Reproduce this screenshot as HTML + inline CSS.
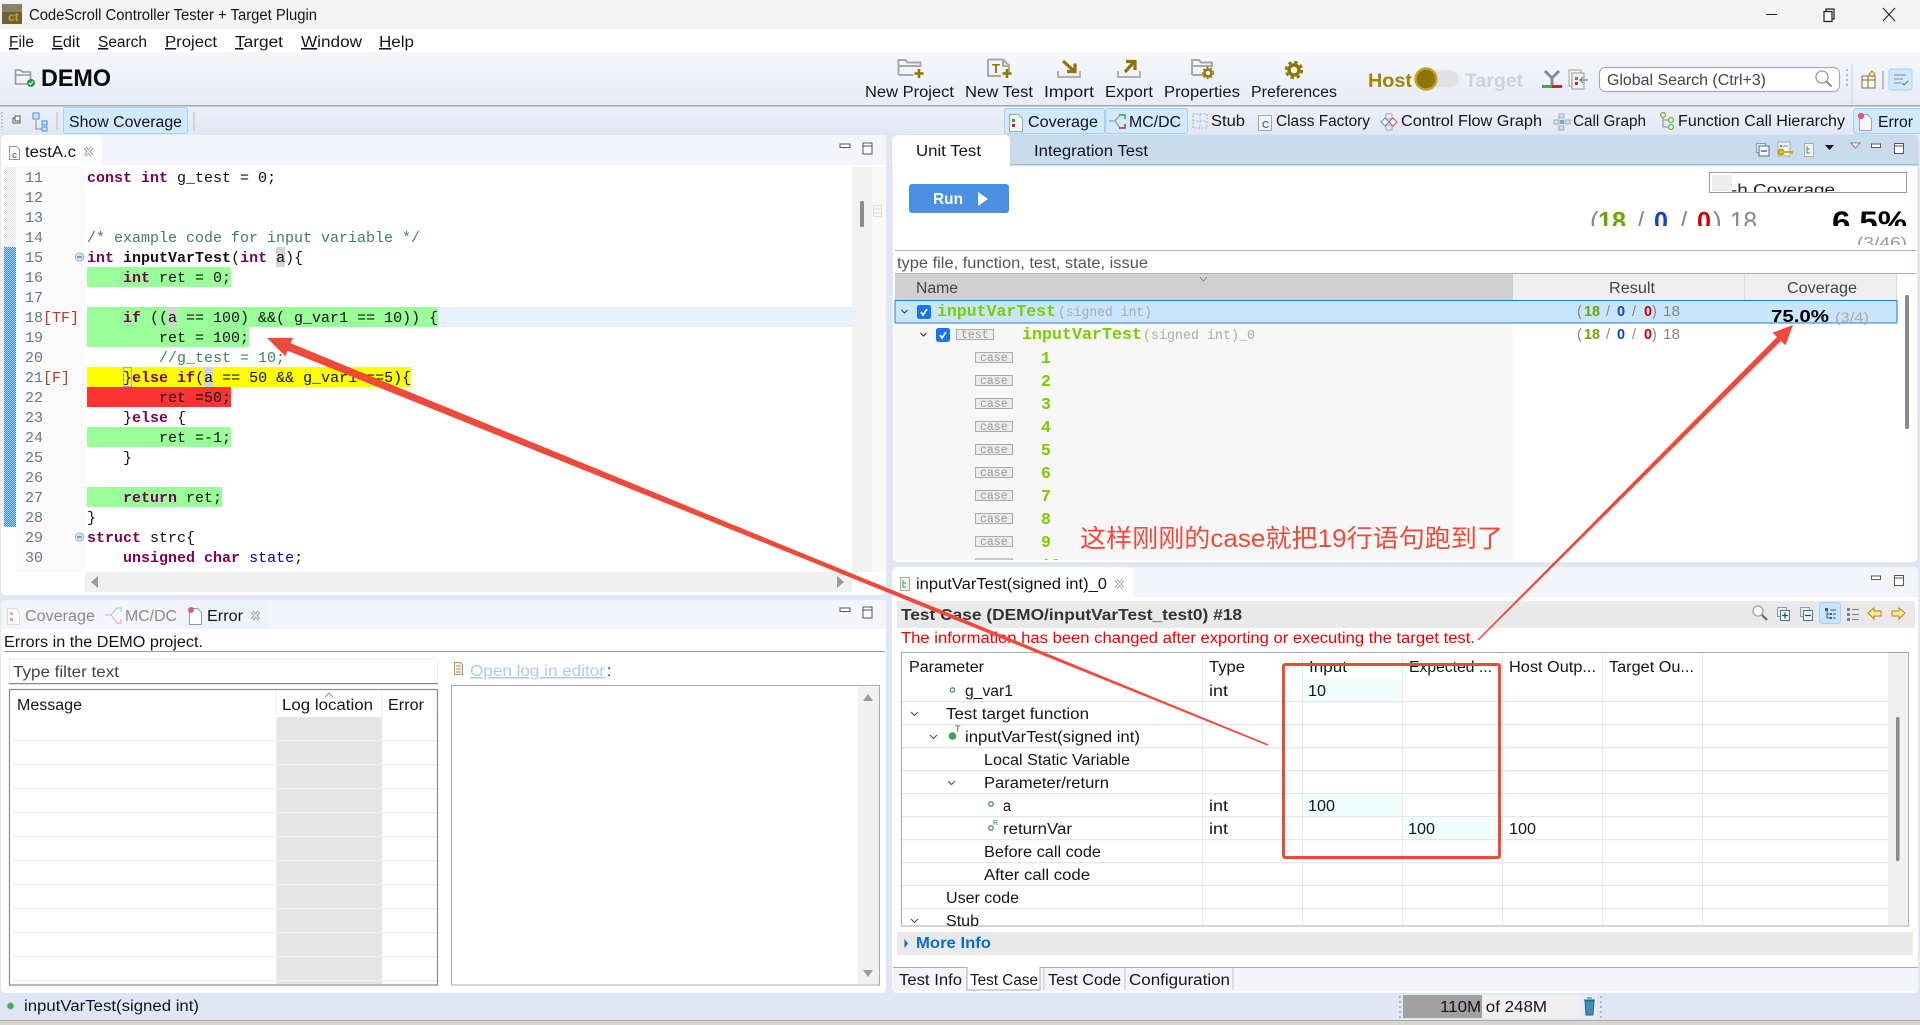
<!DOCTYPE html>
<html><head><meta charset="utf-8"><title>CodeScroll Controller Tester + Target Plugin</title>
<style>
html,body{margin:0;padding:0;background:#e0e6f4;width:1920px;height:1025px;overflow:hidden}
svg{display:block}
text{font-family:"Liberation Sans","Noto Sans CJK SC",sans-serif;font-size:15.5px;fill:#14141e;white-space:pre}
.m,.m tspan{font-family:"Liberation Mono",monospace;font-size:15px;fill:#111}
.k{fill:#7f0055!important;font-weight:bold}
.b{font-weight:bold}
.c{fill:#3f7f5f!important}
.ln{font-family:"Liberation Mono",monospace;font-size:15px;fill:#63788a}
.lr{font-family:"Liberation Mono",monospace;font-size:15px;fill:#c0392b}
.g{font-family:"Liberation Mono",monospace;font-size:16.5px;font-weight:bold;fill:#7ccb00}
.gs{font-family:"Liberation Mono",monospace;font-size:13.5px;fill:#aaa}
.cs{font-family:"Liberation Mono",monospace;font-size:11.5px;fill:#999}
.r{font-size:14.5px}
.x1{stroke:#8a8a8a;stroke-width:3;fill:none}
.x2{stroke:#fff;stroke-width:1.4;fill:none}
</style></head><body>
<svg width="1920" height="1025" viewBox="0 0 1920 1025" xmlns="http://www.w3.org/2000/svg">
<defs>
<linearGradient id="g1" x1="0" y1="0" x2="0" y2="1"><stop offset="0" stop-color="#f6f7fb"/><stop offset="1" stop-color="#e8ecf7"/></linearGradient>
<linearGradient id="g2" x1="0" y1="0" x2="0" y2="1"><stop offset="0" stop-color="#edf0f9"/><stop offset="1" stop-color="#e2e7f5"/></linearGradient>
<pattern id="pB" width="2" height="2" patternUnits="userSpaceOnUse"><rect width="2" height="2" fill="#3b8be0"/><rect width="1" height="1" fill="#a9cff2"/><rect x="1" y="1" width="1" height="1" fill="#a9cff2"/></pattern>
<pattern id="pG" width="2" height="2" patternUnits="userSpaceOnUse"><rect width="2" height="2" fill="#fff"/><rect width="1" height="1" fill="#e2e2e2"/><rect x="1" y="1" width="1" height="1" fill="#e2e2e2"/></pattern>
<clipPath id="cA"><rect x="1709" y="172" width="198" height="20"/></clipPath>
<clipPath id="cB"><rect x="1580" y="205" width="335" height="21"/></clipPath>
<clipPath id="cC"><rect x="1840" y="230" width="75" height="15"/></clipPath>
<clipPath id="cD"><rect x="901" y="652" width="1007" height="274"/></clipPath>
<clipPath id="cE"><rect x="895" y="300" width="1000" height="260"/></clipPath>
</defs>
<rect width="1920" height="1025" fill="#e0e6f4"/>

<!-- title bar -->
<rect width="1920" height="29" fill="#f3f3f4"/>
<rect x="2" y="4" width="20" height="20" fill="#6b6238"/><rect x="2" y="4" width="20" height="8" fill="#8a8263"/>
<text x="8" y="21" style="font-size:12px;font-weight:bold;fill:#c9a51b">ct</text>
<text x="29" y="20" textLength="288" lengthAdjust="spacingAndGlyphs">CodeScroll Controller Tester + Target Plugin</text>
<rect x="1766" y="14" width="11" height="1" fill="#222"/>
<path d="M1824 11.5h8v10h-8zM1826 11.5v-2.5h8v10h-2" fill="none" stroke="#222" stroke-width="1.2"/>
<path d="M1883 8l12 13M1895 8l-12 13" stroke="#222" stroke-width="1.1"/>

<!-- menu -->
<rect y="29" width="1920" height="23" fill="#fff"/>
<g>
<text x="9" y="47" textLength="25" lengthAdjust="spacingAndGlyphs"><tspan text-decoration="underline">F</tspan>ile</text>
<text x="52" y="47" textLength="28" lengthAdjust="spacingAndGlyphs"><tspan text-decoration="underline">E</tspan>dit</text>
<text x="98" y="47" textLength="49" lengthAdjust="spacingAndGlyphs"><tspan text-decoration="underline">S</tspan>earch</text>
<text x="165" y="47" textLength="52" lengthAdjust="spacingAndGlyphs"><tspan text-decoration="underline">P</tspan>roject</text>
<text x="235" y="47" textLength="48" lengthAdjust="spacingAndGlyphs"><tspan text-decoration="underline">T</tspan>arget</text>
<text x="301" y="47" textLength="61" lengthAdjust="spacingAndGlyphs"><tspan text-decoration="underline">W</tspan>indow</text>
<text x="379" y="47" textLength="35" lengthAdjust="spacingAndGlyphs"><tspan text-decoration="underline">H</tspan>elp</text>
</g>

<!-- main toolbar -->
<rect y="52" width="1920" height="53" fill="url(#g1)"/>
<rect y="105" width="1920" height="1.5" fill="#a9a9a9"/>
<path d="M15.5 84V70h5l2 2h8v12zM15.5 75h15" fill="none" stroke="#999" stroke-width="1.6"/>
<circle cx="31" cy="83" r="4" fill="#2a9d3c"/><path d="M29 83l1.5 1.5 2.5-3" stroke="#fff" fill="none"/>
<text x="41" y="86" textLength="70" lengthAdjust="spacingAndGlyphs" style="font-size:24px;font-weight:bold;fill:#0a0a0a">DEMO</text>

<path d="M898.500 75V60h7l2 2.500h13V67M898.500 66h21M898.500 75h15" fill="none" stroke="#a8a8a8" stroke-width="2"/>
<path d="M919 69v9M914.500 73.500h9" stroke="#8f7400" stroke-width="2.600"/>
<path d="M988 59.500h15l6 6V72M988 59.500V76h13M1009 66h-6v-6" fill="none" stroke="#a8a8a8" stroke-width="2"/>
<text x="992" y="73" style="font-size:13px;font-weight:bold;fill:#8f7400">T</text>
<path d="M1007 69v9M1002.500 73.500h9" stroke="#8f7400" stroke-width="2.600"/>
<path d="M1058 71v6h22v-6" fill="none" stroke="#a8a8a8" stroke-width="1.800"/>
<path d="M1063 61l11 10M1075 63.500v8h-8" fill="none" stroke="#8f7400" stroke-width="3.200"/>
<path d="M1118 71v6h22v-6" fill="none" stroke="#a8a8a8" stroke-width="1.800"/>
<path d="M1125 72l9-10M1126 61.500h9v8.500" fill="none" stroke="#8f7400" stroke-width="3.200"/>
<path d="M1192 75V60h7l2 2.500h11V67M1192 66h19M1192 75h14" fill="none" stroke="#a8a8a8" stroke-width="2"/>
<circle cx="1208" cy="73" r="3.500" fill="none" stroke="#8f7400" stroke-width="2.400"/><circle cx="1208" cy="73" r="5.500" fill="none" stroke="#8f7400" stroke-width="1.200" stroke-dasharray="2 2"/>
<circle cx="1294" cy="70" r="5" fill="none" stroke="#8f7400" stroke-width="3.400"/><circle cx="1294" cy="70" r="8" fill="none" stroke="#8f7400" stroke-width="2.400" stroke-dasharray="3.500 2.800"/>

<text x="865" y="97" textLength="89" lengthAdjust="spacingAndGlyphs">New Project</text>
<text x="965" y="97" textLength="68" lengthAdjust="spacingAndGlyphs">New Test</text>
<text x="1044" y="97" textLength="50" lengthAdjust="spacingAndGlyphs">Import</text>
<text x="1105" y="97" textLength="48" lengthAdjust="spacingAndGlyphs">Export</text>
<text x="1164" y="97" textLength="76" lengthAdjust="spacingAndGlyphs">Properties</text>
<text x="1251" y="97" textLength="86" lengthAdjust="spacingAndGlyphs">Preferences</text>

<text x="1368" y="87" textLength="44" lengthAdjust="spacingAndGlyphs" style="font-size:19px;font-weight:bold;fill:#a08400">Host</text>
<rect x="1418" y="70" width="41" height="18" rx="9" fill="#e2e2e4" stroke="#eeeeef" stroke-width="1.500"/>
<circle cx="1426" cy="79" r="10.500" fill="#8f7400" stroke="#bea52e" stroke-width="2.400"/>
<text x="1465" y="87" textLength="58" lengthAdjust="spacingAndGlyphs" style="font-size:19px;font-weight:bold;fill:#d2d2d4">Target</text>
<path d="M1545 71l7 7 7-7M1552 76v9" fill="none" stroke="#8d8d8d" stroke-width="3"/>
<rect x="1542" y="85" width="10" height="3" fill="#33b34a"/><rect x="1552" y="85" width="10" height="3" fill="#c62828"/>
<rect x="1569" y="70" width="12" height="16" fill="#f2f2f2" stroke="#a5a5a5"/><rect x="1572" y="73" width="12" height="16" fill="#f2f2f2" stroke="#999"/>
<rect x="1575" y="77" width="3" height="3" fill="#2aa84a"/><rect x="1575" y="82" width="3" height="3" fill="#c62828"/><path d="M1588 80h-8M1583 77l-3 3 3 3" stroke="#666" fill="none"/>
<rect x="1599.500" y="67.500" width="240" height="24" rx="6" fill="#fff" stroke="#aaaab2" stroke-width="1.200"/>
<text x="1607" y="85" textLength="159" lengthAdjust="spacingAndGlyphs" style="fill:#44444e">Global Search (Ctrl+3)</text>
<circle cx="1822" cy="77" r="6" fill="none" stroke="#9a9a9a" stroke-width="1.300"/><path d="M1826.500 81.500l5 5" stroke="#8a8a8a" stroke-width="2"/>
<path d="M1847 69v20" stroke="#999" stroke-width="1.300" stroke-dasharray="2 3"/><path d="M1852 64v40" stroke="#d0d0d4"/>
<rect x="1862" y="76" width="13" height="12" fill="#fff6df" stroke="#6d6d6d"/><path d="M1862 80h13M1868 76v12" stroke="#6d6d6d"/><path d="M1872 71l3 3-3 3-3-3z" fill="#ffe9a8" stroke="#b58a1d"/>
<path d="M1883 71v18" stroke="#888"/>
<rect x="1889" y="69" width="23" height="21" rx="2" fill="#cfe8fb" stroke="#a9d3f2"/><path d="M1894 75h12M1894 79h9M1894 83h7" stroke="#888"/><path d="M1902 83l2 2 4-4" stroke="#8f7400" fill="none"/>

<!-- second toolbar -->
<rect y="106.500" width="1920" height="28.500" fill="url(#g2)"/>
<path d="M2 112v18" stroke="#888" stroke-dasharray="1.500 2"/>
<rect x="13" y="118" width="7" height="5" fill="#fff" stroke="#555"/><rect x="15" y="116" width="5" height="5" fill="#fff" stroke="#555"/>
<path d="M36 120v9h6" fill="none" stroke="#888"/><rect x="33" y="113" width="6" height="6" fill="#cfe3fb" stroke="#4a8fd6"/><rect x="42" y="121" width="5" height="4" fill="#cfe3fb" stroke="#4a8fd6"/><rect x="42" y="127" width="5" height="4" fill="#cfe3fb" stroke="#4a8fd6"/>
<path d="M57 112v18M194 112v18" stroke="#bbb"/>
<rect x="63.500" y="107.500" width="124" height="26" rx="2" fill="#d0e9fb" stroke="#a6d2f2"/>
<text x="69" y="127" textLength="113" lengthAdjust="spacingAndGlyphs">Show Coverage</text>

<rect x="1004.500" y="108.500" width="100" height="25" rx="2" fill="#d0e9fb" stroke="#a6d2f2"/>
<rect x="1105.500" y="108.500" width="82" height="25" rx="2" fill="#d0e9fb" stroke="#a6d2f2"/>
<path d="M1009.500 114.500h9l4 4v13h-13z" fill="#f4f4f4" stroke="#a5a5a5"/><rect x="1012" y="119" width="3" height="3" fill="#2aa84a"/><rect x="1012" y="124" width="3" height="3" fill="#c62828"/>
<path d="M1109 121h6l5-6M1115 121l5 7" fill="none" stroke="#9a9a9a" stroke-width="1.300"/><path d="M1119 115h6v4" fill="none" stroke="#2aa84a" stroke-width="1.500"/><path d="M1119 128h6v-4" fill="none" stroke="#c62828" stroke-width="1.500"/>
<text x="1028" y="127" textLength="70" lengthAdjust="spacingAndGlyphs">Coverage</text>
<text x="1129" y="127" textLength="52" lengthAdjust="spacingAndGlyphs">MC/DC</text>
<rect x="1193" y="114" width="14" height="14" fill="none" stroke="#b5c5d8" stroke-dasharray="2 1.500" stroke-width="1.600"/><path d="M1200 114v14M1193 121h14" stroke="#9fb8d8" stroke-dasharray="2 1.500"/>
<text x="1211" y="126" textLength="34" lengthAdjust="spacingAndGlyphs">Stub</text>
<path d="M1258.500 115.500h13v15h-13z" fill="#f4f4f4" stroke="#a5a5a5"/><text x="1262" y="128" style="font-size:10px;font-weight:bold;fill:#3b7ec6">C</text>
<text x="1276" y="126" textLength="94" lengthAdjust="spacingAndGlyphs">Class Factory</text>
<rect x="1386" y="114" width="6" height="5" fill="none" stroke="#aaa"/><rect x="1386" y="125" width="6" height="5" fill="none" stroke="#aaa"/><path d="M1385 118l-4 4 4 4 4-4z" fill="#fff" stroke="#4a8fd6"/><path d="M1393 118l4 4-4 4-4-4z" fill="#fff" stroke="#d05050"/>
<text x="1401" y="126" textLength="141" lengthAdjust="spacingAndGlyphs">Control Flow Graph</text>
<rect x="1559" y="114" width="5" height="4" fill="#ddd" stroke="#aaa"/><rect x="1559" y="126" width="5" height="4" fill="#ddd" stroke="#aaa"/><rect x="1554" y="120" width="5" height="4" fill="#ddd" stroke="#aaa"/><rect x="1565" y="120" width="5" height="4" fill="#ddd" stroke="#aaa"/><rect x="1560" y="120" width="4" height="4" fill="#6aa7e8"/>
<text x="1573" y="126" textLength="73" lengthAdjust="spacingAndGlyphs">Call Graph</text>
<path d="M1663 116v11h6M1663 120h6" fill="none" stroke="#888"/><circle cx="1663" cy="115" r="2.400" fill="#fff" stroke="#63b32e" stroke-width="1.300"/><circle cx="1671" cy="120" r="2.400" fill="#fff" stroke="#63b32e" stroke-width="1.300"/><circle cx="1671" cy="127" r="2.400" fill="#fff" stroke="#63b32e" stroke-width="1.300"/>
<text x="1678" y="126" textLength="167" lengthAdjust="spacingAndGlyphs">Function Call Hierarchy</text>
<rect x="1853.500" y="108.500" width="70" height="25" rx="3" fill="#d0e9fb" stroke="#a6d2f2"/>
<path d="M1859.500 114.500h8l4 4v12h-12z" fill="#f6f6f6" stroke="#a5a5a5"/><circle cx="1861" cy="116" r="3.200" fill="#d65a7a"/>
<text x="1878" y="127" textLength="35" lengthAdjust="spacingAndGlyphs">Error</text>

<!-- left editor panel -->
<rect x="1" y="135" width="885" height="460" rx="5" fill="#fff"/>
<path d="M1 165V140a5 5 0 0 1 5-5h880v30z" fill="#f3f5fb"/>
<path d="M1 165v-25a5 5 0 0 1 5-5h91a5 5 0 0 1 5 5v25z" fill="#fff"/>
<path d="M9.500 146.500h7l3 3v10h-10z" fill="#fff" stroke="#999"/><text x="12" y="158" style="font-size:9px;font-weight:bold;fill:#3b7ec6">c</text>
<text x="25" y="157" textLength="51" lengthAdjust="spacingAndGlyphs">testA.c</text>
<path class="x1" d="M85 147.500l7 8M92 147.500l-7 8"/><path class="x2" d="M85 147.500l7 8M92 147.500l-7 8"/>
<rect x="840" y="144" width="10" height="3.500" fill="#fff" stroke="#555"/><rect x="863" y="143" width="9" height="11" fill="#fff" stroke="#555"/><path d="M863 146h9" stroke="#555"/>

<rect x="852" y="167" width="20" height="405" fill="#f1f1f1"/>
<rect x="860" y="201" width="4" height="26" rx="1.500" fill="#8a8a8a"/>
<rect x="872" y="167" width="14" height="405" fill="#f8f8f8"/>
<rect x="873.500" y="205.500" width="8" height="11" fill="none" stroke="#ddd"/><path d="M874 209h7M874 213h7" stroke="#ddd"/>
<rect x="4" y="167" width="12" height="80" fill="url(#pG)"/>
<rect x="4" y="247" width="12" height="280" fill="url(#pB)"/>
<rect x="16" y="167" width="69" height="405" fill="#fafafa"/>
<rect x="85" y="572" width="767" height="20" fill="#f0f0f0"/>
<path d="M98 576l-7 6 7 6z" fill="#9a9a9a"/>
<path d="M837 576v12l7-6z" fill="#9a9a9a"/>

<!-- line bgs -->
<rect x="87" y="307" width="765" height="20" fill="#e8f2fe"/>
<rect x="87" y="267" width="144" height="20" fill="#99ff99"/>
<rect x="87" y="307" width="351" height="20" fill="#99ff99"/>
<rect x="87" y="327" width="162" height="20" fill="#99ff99"/>
<rect x="87" y="367" width="324" height="20" fill="#ffff00"/>
<rect x="87" y="387" width="144" height="20" fill="#ff3333"/>
<rect x="87" y="427" width="144" height="20" fill="#99ff99"/>
<rect x="87" y="487" width="135" height="20" fill="#99ff99"/>
<rect x="276" y="247" width="9" height="20" fill="#d4d4d4"/>
<rect x="168" y="307" width="9" height="20" fill="#d4d4d4"/>
<rect x="204" y="367" width="9" height="20" fill="#d4d4d4"/>
<rect x="123.500" y="367.500" width="8" height="19" fill="none" stroke="#aaa"/>

<circle cx="79.500" cy="257" r="4.200" fill="#cfe0ef" stroke="#9db7cc"/><path d="M77 257h5" stroke="#557"/>
<circle cx="79.500" cy="537" r="4.200" fill="#cfe0ef" stroke="#9db7cc"/><path d="M77 537h5" stroke="#557"/>

<g transform="translate(0 -1)">
<text class="ln" x="25" y="183">11</text><text class="ln" x="25" y="203">12</text><text class="ln" x="25" y="223">13</text><text class="ln" x="25" y="243">14</text><text class="ln" x="25" y="263">15</text><text class="ln" x="25" y="283">16</text><text class="ln" x="25" y="303">17</text><text class="ln" x="25" y="323">18</text><text class="lr" x="43" y="323">[TF]</text><text class="ln" x="25" y="343">19</text><text class="ln" x="25" y="363">20</text><text class="ln" x="25" y="383">21</text><text class="lr" x="43" y="383">[F]</text><text class="ln" x="25" y="403">22</text><text class="ln" x="25" y="423">23</text><text class="ln" x="25" y="443">24</text><text class="ln" x="25" y="463">25</text><text class="ln" x="25" y="483">26</text><text class="ln" x="25" y="503">27</text><text class="ln" x="25" y="523">28</text><text class="ln" x="25" y="543">29</text><text class="ln" x="25" y="563">30</text>
<text class="m" x="87" y="183"><tspan class="k">const</tspan> <tspan class="k">int</tspan> g_test = 0;</text>
<text class="m" x="87" y="243"><tspan class="c">/* example code for input variable */</tspan></text>
<text class="m" x="87" y="263"><tspan class="k">int</tspan> <tspan class="b">inputVarTest</tspan>(<tspan class="k">int</tspan> a){</text>
<text class="m" x="87" y="283">    <tspan class="k">int</tspan> ret = 0;</text>
<text class="m" x="87" y="323">    <tspan class="k">if</tspan> ((a == 100) &amp;&amp;( g_var1 == 10)) {</text>
<text class="m" x="87" y="343">        ret = 100;</text>
<text class="m" x="87" y="363">        <tspan class="c">//g_test = 10;</tspan></text>
<text class="m" x="87" y="383">    }<tspan class="k">else</tspan> <tspan class="k">if</tspan>(a == 50 &amp;&amp; g_var1 ==5){</text>
<text class="m" x="87" y="403">        ret =50;</text>
<text class="m" x="87" y="423">    }<tspan class="k">else</tspan> {</text>
<text class="m" x="87" y="443">        ret =-1;</text>
<text class="m" x="87" y="463">    }</text>
<text class="m" x="87" y="503">    <tspan class="k">return</tspan> ret;</text>
<text class="m" x="87" y="523">}</text>
<text class="m" x="87" y="543"><tspan class="k">struct</tspan> strc{</text>
<text class="m" x="87" y="563">    <tspan class="k">unsigned</tspan> <tspan class="k">char</tspan> <tspan style="fill:#0000c0">state</tspan>;</text>
</g>

<!-- bottom left panel -->
<rect x="1" y="600" width="885" height="393" rx="5" fill="#fff"/>
<path d="M1 629v-24a5 5 0 0 1 5-5h880v29z" fill="#f3f5fb"/>
<path d="M184 629v-24a5 5 0 0 1 5-5h75a5 5 0 0 1 5 5v24z" fill="#eef2f9"/>
<path d="M7.500 608.500h8l4 4v12h-12z" fill="#fafafa" stroke="#ddd"/><rect x="10" y="612" width="3" height="3" fill="#9cd6ac"/><rect x="10" y="618" width="3" height="3" fill="#e8a0a0"/>
<text x="25" y="621" textLength="70" lengthAdjust="spacingAndGlyphs" style="fill:#8a8a8a">Coverage</text>
<path d="M105 615h6l6-7M111 615l6 8" fill="none" stroke="#c0c0c0"/><path d="M116 608h5v4" fill="none" stroke="#9cd6ac"/><path d="M116 623h5v-4" fill="none" stroke="#e8a0a0"/>
<text x="125" y="621" textLength="52" lengthAdjust="spacingAndGlyphs" style="fill:#8a8a8a">MC/DC</text>
<path d="M189.500 608.500h8l4 4v12h-12z" fill="#fff" stroke="#999"/><circle cx="191" cy="610" r="3" fill="#d65a7a"/>
<text x="207" y="621" textLength="36" lengthAdjust="spacingAndGlyphs">Error</text>
<path class="x1" d="M252 611.500l7 8M259 611.500l-7 8"/><path class="x2" d="M252 611.500l7 8M259 611.500l-7 8" style="stroke:#eef2f9"/>
<rect x="840" y="608" width="10" height="3.500" fill="#fff" stroke="#555"/><rect x="863" y="607" width="9" height="11" fill="#fff" stroke="#555"/><path d="M863 610h9" stroke="#555"/>
<text x="4" y="647" textLength="199" lengthAdjust="spacingAndGlyphs">Errors in the DEMO project.</text>
<rect x="4" y="651" width="881" height="1" fill="#999"/>
<rect x="9.500" y="659" width="428" height="25" fill="#fff" stroke="#e9e9e9"/><rect x="9" y="683" width="429" height="1.200" fill="#888"/>
<text x="13" y="677" textLength="106" lengthAdjust="spacingAndGlyphs" style="fill:#444">Type filter text</text>
<rect x="9.500" y="689.500" width="428" height="295.500" fill="#fff" stroke="#8a8a8a" stroke-width="1.200"/>
<rect x="277" y="717" width="105" height="267" fill="#e5e5e5"/>
<path d="M276 691v293M382 691v293M434 691v26" stroke="#ececec"/>
<g fill="#efefef">
<rect x="10" y="740" width="427" height="1.200"/><rect x="10" y="764" width="427" height="1.200"/><rect x="10" y="788" width="427" height="1.200"/><rect x="10" y="812" width="427" height="1.200"/><rect x="10" y="836" width="427" height="1.200"/><rect x="10" y="860" width="427" height="1.200"/><rect x="10" y="884" width="427" height="1.200"/><rect x="10" y="908" width="427" height="1.200"/><rect x="10" y="932" width="427" height="1.200"/><rect x="10" y="956" width="427" height="1.200"/><rect x="10" y="980" width="427" height="1.200"/>
</g>
<path d="M325 697l4-4 4 4" fill="none" stroke="#777" stroke-width=".8"/>
<text x="17" y="710" textLength="65" lengthAdjust="spacingAndGlyphs">Message</text>
<text x="282" y="710" textLength="91" lengthAdjust="spacingAndGlyphs">Log location</text>
<text x="388" y="710" textLength="36" lengthAdjust="spacingAndGlyphs">Error</text>
<path d="M454.500 662.500h6l2 2v10h-8z" fill="#f6f1df" stroke="#b39a5a"/><path d="M456 666h5M456 669h5M456 672h5" stroke="#777" stroke-width=".8"/>
<text x="470" y="676" textLength="135" lengthAdjust="spacingAndGlyphs" text-decoration="underline" style="fill:#a9cdeb">Open log in editor</text>
<text x="607" y="676">:</text>
<rect x="451.500" y="685.500" width="428" height="299.500" fill="#fff" stroke="#aaa"/>
<rect x="858" y="687" width="21" height="297" fill="#f0f0f0"/>
<path d="M868 694l-5 7h10zM868 977l-5-7h10z" fill="#9a9a9a"/>

<!-- status -->
<circle cx="10.500" cy="1006" r="3.500" fill="#47a86a" stroke="#a3d9b4"/>
<text x="24" y="1011" textLength="175" lengthAdjust="spacingAndGlyphs">inputVarTest(signed int)</text>
<rect y="1020" width="1920" height="1" fill="#a9a9a9"/>
<rect y="1021" width="1920" height="4" fill="#d6d6cf"/>
<rect x="1403" y="995" width="177" height="23" fill="#f0f0f0"/><rect x="1403" y="995" width="79" height="23" fill="#a0a0a0"/>
<text x="1440" y="1012" textLength="107" lengthAdjust="spacingAndGlyphs">110M of 248M</text>
<path d="M1400 996v22M1601 996v22" stroke="#888" stroke-dasharray="2 3"/>
<rect x="1580" y="995" width="17" height="23" fill="#e7ecf6"/>
<path d="M1585 1001h9l-1 14h-7zM1584 1000h11M1587 998h5" fill="#3f8fb0" stroke="#1d6a88"/>

<!-- right top panel -->
<rect x="892" y="135" width="1026" height="428" rx="5" fill="#fff" stroke="#d5dbe6"/>
<path d="M892 165v-25a5 5 0 0 1 5-5h1016a5 5 0 0 1 5 5v25z" fill="#c9dcee"/>
<path d="M892 165v-25a5 5 0 0 1 5-5h108a5 5 0 0 1 5 5v25z" fill="#fff"/>
<rect x="1010" y="164" width="908" height="1.500" fill="#a7b8c9"/>
<text x="916" y="156" textLength="65" lengthAdjust="spacingAndGlyphs">Unit Test</text>
<text x="1034" y="156" textLength="114" lengthAdjust="spacingAndGlyphs">Integration Test</text>
<rect x="1756.500" y="143.500" width="9" height="9" fill="#e4ecf4" stroke="#8a9bb0"/><rect x="1759" y="146" width="10" height="10" fill="#f3f7fb" stroke="#4a7098"/><path d="M1761 151h6" stroke="#2c5a8c" stroke-width="1.300"/>
<rect x="1778" y="142" width="12" height="14" fill="#f2f2f0" stroke="#aaa"/><rect x="1780" y="145" width="2" height="2" fill="#2aa84a"/><path d="M1783 146h5" stroke="#888"/><circle cx="1781" cy="152" r="2.800" fill="#e8b923" stroke="#a8821a"/><path d="M1783 152h9v2" stroke="#d8a61f" stroke-width="2" fill="none"/>
<rect x="1804.500" y="143.500" width="9" height="13" fill="#f3f3f3" stroke="#aaa"/><path d="M1807 146v7h3M1807 149h3" stroke="#2aa84a" fill="none"/>
<path d="M1825 145h9l-4.500 5z" fill="#111"/>
<path d="M1851 143h9l-4.500 5z" fill="#fff" stroke="#666" stroke-width=".8"/>
<rect x="1871.500" y="144" width="9" height="3.500" fill="#fff" stroke="#555"/><rect x="1894.500" y="143.500" width="9" height="10" fill="#fff" stroke="#555"/><path d="M1894 146h10" stroke="#555"/>

<rect x="909" y="184" width="100" height="29" rx="3" fill="#4a90e0"/>
<text x="933" y="204" textLength="30" lengthAdjust="spacingAndGlyphs" class="b" style="fill:#fff">Run</text>
<path d="M978 192v14l10-7z" fill="#fff"/>

<rect x="1709.500" y="172.500" width="197" height="20" fill="#fff" stroke="#999"/>
<g clip-path="url(#cA)"><text x="1731" y="195" textLength="104" lengthAdjust="spacingAndGlyphs" style="fill:#222">-h Coverage</text></g>
<rect x="1712" y="175" width="20" height="16" fill="#eeeeee"/>
<g clip-path="url(#cB)">
<text x="1590" y="230" style="font-size:26px;fill:#888">(</text>
<text x="1598" y="230" textLength="28" lengthAdjust="spacingAndGlyphs" style="font-size:26px;fill:#66a800;font-weight:bold">18</text>
<text x="1637" y="230" style="font-size:26px;fill:#888">/</text>
<text x="1654" y="230" textLength="14" lengthAdjust="spacingAndGlyphs" style="font-size:26px;fill:#1144c0;font-weight:bold">0</text>
<text x="1680" y="230" style="font-size:26px;fill:#888">/</text>
<text x="1697" y="230" textLength="14" lengthAdjust="spacingAndGlyphs" style="font-size:26px;fill:#d00000;font-weight:bold">0</text>
<text x="1713" y="230" style="font-size:26px;fill:#888">)</text>
<text x="1730" y="230" textLength="27" lengthAdjust="spacingAndGlyphs" style="font-size:26px;fill:#888">18</text>
<text x="1832" y="232" textLength="75" lengthAdjust="spacingAndGlyphs" style="font-size:30px;font-weight:bold;fill:#000">6.5%</text>
</g>
<g clip-path="url(#cC)"><text x="1857" y="248" textLength="50" lengthAdjust="spacingAndGlyphs" style="fill:#999">(3/46)</text></g>
<rect x="895" y="250" width="1021" height="1" fill="#b0b0b0"/>
<text x="897" y="268" textLength="251" lengthAdjust="spacingAndGlyphs" style="fill:#555">type file, function, test, state, issue</text>
<rect x="895" y="273" width="1021" height="1" fill="#b0b0b0"/>
<rect x="895" y="274" width="618" height="26" fill="#d0d0d0"/>
<rect x="1513" y="274" width="384" height="26" fill="#efefef"/>
<path d="M1744.500 274v26M1896.500 274v26" stroke="#dcdcdc"/>
<path d="M1200 277l3.500 4 3.500-4" fill="none" stroke="#777" stroke-width=".8"/>
<text x="916" y="293" textLength="42" lengthAdjust="spacingAndGlyphs" style="fill:#444">Name</text>
<text x="1609" y="293" textLength="46" lengthAdjust="spacingAndGlyphs" style="fill:#444">Result</text>
<text x="1787" y="293" textLength="70" lengthAdjust="spacingAndGlyphs" style="fill:#444">Coverage</text>
<rect x="895" y="300" width="618" height="260" fill="#f7f7f7"/>
<rect x="1905" y="295" width="4" height="134" rx="1.500" fill="#8a8a8a"/>
<rect x="895" y="300.500" width="1002" height="22.500" fill="#c9e5fb" stroke="#1a7fd4"/>
<path d="M901.500 310l3 3 3-3" fill="none" stroke="#333" stroke-width="1.100"/>
<rect x="917" y="305" width="14" height="14" rx="2.500" fill="#1a73e8"/><path d="M921 312l2 3 4-6" fill="none" stroke="#fff" stroke-width="1.600"/>
<text class="g" x="937" y="316" textLength="119" lengthAdjust="spacingAndGlyphs">inputVarTest</text>
<text class="gs" x="1058" y="316" textLength="94" lengthAdjust="spacingAndGlyphs">(signed int)</text>
<path d="M920.500 333l3 3 3-3" fill="none" stroke="#333" stroke-width="1.100"/>
<rect x="936" y="328" width="14" height="14" rx="2.500" fill="#1a73e8"/><path d="M940 335l2 3 4-6" fill="none" stroke="#fff" stroke-width="1.600"/>
<rect x="956.500" y="329.500" width="37" height="10" fill="#ececec" stroke="#aaa"/><text class="cs" x="961" y="338" style="fill:#999">test</text>
<text class="g" x="1022" y="339" textLength="120" lengthAdjust="spacingAndGlyphs">inputVarTest</text>
<text class="gs" x="1143" y="339" textLength="112" lengthAdjust="spacingAndGlyphs">(signed int)_0</text>

<g>
<text class="r" x="1577" y="316" style="fill:#888">(</text><text class="r b" x="1584" y="316" textLength="16" lengthAdjust="spacingAndGlyphs" style="fill:#66a800">18</text><text class="r" x="1606" y="316" style="fill:#888">/</text><text class="r b" x="1617" y="316" style="fill:#1144c0">0</text><text class="r" x="1632" y="316" style="fill:#888">/</text><text class="r b" x="1644" y="316" style="fill:#d00000">0</text><text class="r" x="1652" y="316" style="fill:#888">)</text><text class="r" x="1663" y="316" textLength="17" lengthAdjust="spacingAndGlyphs" style="fill:#888">18</text>
<text class="r" x="1577" y="339" style="fill:#888">(</text><text class="r b" x="1584" y="339" textLength="16" lengthAdjust="spacingAndGlyphs" style="fill:#66a800">18</text><text class="r" x="1606" y="339" style="fill:#888">/</text><text class="r b" x="1617" y="339" style="fill:#1144c0">0</text><text class="r" x="1632" y="339" style="fill:#888">/</text><text class="r b" x="1644" y="339" style="fill:#d00000">0</text><text class="r" x="1652" y="339" style="fill:#888">)</text><text class="r" x="1663" y="339" textLength="17" lengthAdjust="spacingAndGlyphs" style="fill:#888">18</text>
</g>
<text x="1771" y="322" textLength="58" lengthAdjust="spacingAndGlyphs" style="font-size:17.500px;font-weight:bold;fill:#000">75.0%</text>
<text x="1835" y="322" textLength="34" lengthAdjust="spacingAndGlyphs" style="font-size:14px;fill:#aaa">(3/4)</text>

<g clip-path="url(#cE)">
<g fill="#ececec" stroke="#aaa">
<rect x="975.500" y="352.500" width="37" height="10"/><rect x="975.500" y="375.500" width="37" height="10"/><rect x="975.500" y="398.500" width="37" height="10"/><rect x="975.500" y="421.500" width="37" height="10"/><rect x="975.500" y="444.500" width="37" height="10"/><rect x="975.500" y="467.500" width="37" height="10"/><rect x="975.500" y="490.500" width="37" height="10"/><rect x="975.500" y="513.500" width="37" height="10"/><rect x="975.500" y="536.500" width="37" height="10"/><rect x="975.500" y="559" width="37" height="10"/>
</g>
<text class="cs" x="980" y="361">case</text><text class="cs" x="980" y="384">case</text><text class="cs" x="980" y="407">case</text><text class="cs" x="980" y="430">case</text><text class="cs" x="980" y="453">case</text><text class="cs" x="980" y="476">case</text><text class="cs" x="980" y="499">case</text><text class="cs" x="980" y="522">case</text><text class="cs" x="980" y="545">case</text>
<text class="g" x="1041" y="363">1</text><text class="g" x="1041" y="386">2</text><text class="g" x="1041" y="409">3</text><text class="g" x="1041" y="432">4</text><text class="g" x="1041" y="455">5</text><text class="g" x="1041" y="478">6</text><text class="g" x="1041" y="501">7</text><text class="g" x="1041" y="524">8</text><text class="g" x="1041" y="547">9</text><text class="g" x="1041" y="570">10</text>
</g>
<text x="1080" y="547" textLength="423" lengthAdjust="spacingAndGlyphs" style="font-size:25px;fill:#f0493a">这样刚刚的case就把19行语句跑到了</text>

<!-- right bottom panel -->
<rect x="892" y="567" width="1026" height="426" rx="5" fill="#fff"/>
<path d="M892 597v-25a5 5 0 0 1 5-5h1016a5 5 0 0 1 5 5v25z" fill="#f3f5fb"/>
<path d="M893 597v-25a5 5 0 0 1 5-5h230a5 5 0 0 1 5 5v25z" fill="#fff"/>
<rect x="900.500" y="577.500" width="9" height="13" fill="#f3f3f3" stroke="#aaa"/><path d="M903 580v7h3M903 583h3" stroke="#2aa84a" fill="none"/>
<text x="916" y="589" textLength="191" lengthAdjust="spacingAndGlyphs">inputVarTest(signed int)_0</text>
<path class="x1" d="M1116 580l7 8M1123 580l-7 8"/><path class="x2" d="M1116 580l7 8M1123 580l-7 8"/>
<rect x="1871.500" y="576" width="9" height="3.500" fill="#fff" stroke="#555"/><rect x="1894.500" y="575.500" width="9" height="10" fill="#fff" stroke="#555"/><path d="M1894 578h10" stroke="#555"/>
<rect x="897" y="601" width="1018" height="27" fill="#e9e9e9"/>
<text x="901" y="620" textLength="341" lengthAdjust="spacingAndGlyphs" style="font-weight:bold;fill:#333">Test Case (DEMO/inputVarTest_test0) #18</text>
<rect x="1819.500" y="602.500" width="21" height="21" rx="3" fill="#c6e4fb" stroke="#a6d2f2"/>
<circle cx="1758" cy="611" r="5" fill="#fff" stroke="#a0a0a0" stroke-width="1.300"/><path d="M1762 615l5 5" stroke="#7a5c44" stroke-width="2"/>
<rect x="1777.500" y="607.500" width="9" height="9" fill="#e4ecf4" stroke="#8a9bb0"/><rect x="1780.500" y="610.500" width="9" height="10" fill="#f3f7fb" stroke="#4a7098"/><path d="M1782 615.500h6M1785 612.500v6" stroke="#17507c" stroke-width="1.300"/>
<rect x="1800.500" y="607.500" width="9" height="9" fill="#e4ecf4" stroke="#8a9bb0"/><rect x="1803.500" y="610.500" width="9" height="10" fill="#f3f7fb" stroke="#4a7098"/><path d="M1805 615.500h6" stroke="#17507c" stroke-width="1.300"/>
<path d="M1827 610v8h3M1827 614h3" fill="none" stroke="#557"/><rect x="1825" y="608" width="3" height="3" fill="#557"/><rect x="1830" y="613" width="2" height="2" fill="#557"/><rect x="1830" y="617" width="2" height="2" fill="#557"/><path d="M1830 610h6M1833 614h3M1833 618h3" stroke="#557"/>
<g fill="#6e7fa8"><rect x="1847" y="608" width="3" height="3"/><rect x="1847" y="613" width="3" height="3"/><rect x="1847" y="618" width="3" height="3"/><rect x="1852" y="609" width="7" height="1"/><rect x="1852" y="614" width="7" height="1"/><rect x="1852" y="619" width="7" height="1"/></g>
<path d="M1868 613l6-5v3h7v5h-7v3z" fill="#ffe79e" stroke="#b8860b"/>
<path d="M1905 613l-6-5v3h-7v5h7v3z" fill="#ffe79e" stroke="#b8860b"/>
<text x="901" y="643" textLength="574" lengthAdjust="spacingAndGlyphs" style="fill:#f00000">The information has been changed after exporting or executing the target test.</text>

<rect x="901.500" y="652.500" width="1007" height="273.500" fill="#fff" stroke="#aaa"/>
<rect x="1888" y="653" width="19.500" height="272" fill="#f0f0f0"/>
<rect x="1896" y="717" width="3.500" height="144" rx="1.500" fill="#8a8a8a"/>
<g stroke="#eaeaea" stroke-width="1"><path d="M1202.500 653v273M1302.500 653v273M1402.500 653v273M1502.500 653v273M1602.500 653v273M1702.500 653v273"/></g>
<g fill="#e6e6e6"><rect x="902" y="701" width="986" height="1.300"/><rect x="902" y="724" width="986" height="1.300"/><rect x="902" y="747" width="986" height="1.300"/><rect x="902" y="770" width="986" height="1.300"/><rect x="902" y="793" width="986" height="1.300"/><rect x="902" y="816" width="986" height="1.300"/><rect x="902" y="839" width="986" height="1.300"/><rect x="902" y="862" width="986" height="1.300"/><rect x="902" y="885" width="986" height="1.300"/><rect x="902" y="908" width="986" height="1.300"/></g>
<rect x="1303" y="679" width="99" height="22" fill="#effdfd"/>
<rect x="1303" y="794" width="99" height="22" fill="#effdfd"/>
<rect x="1403" y="817" width="99" height="22" fill="#effdfd"/>
<g clip-path="url(#cD)">
<text x="909" y="672" textLength="75" lengthAdjust="spacingAndGlyphs">Parameter</text>
<text x="1209" y="672" textLength="36" lengthAdjust="spacingAndGlyphs">Type</text>
<text x="1309" y="672" textLength="38" lengthAdjust="spacingAndGlyphs">Input</text>
<text x="1409" y="672" textLength="83" lengthAdjust="spacingAndGlyphs">Expected ...</text>
<text x="1509" y="672" textLength="87" lengthAdjust="spacingAndGlyphs">Host Outp...</text>
<text x="1609" y="672" textLength="85" lengthAdjust="spacingAndGlyphs">Target Ou...</text>

<circle cx="952.500" cy="690" r="2.200" fill="#fff" stroke="#3a9b60" stroke-width="1.300"/>
<text x="965" y="696" textLength="48" lengthAdjust="spacingAndGlyphs">g_var1</text>
<text x="1209" y="696" textLength="19" lengthAdjust="spacingAndGlyphs">int</text>
<text x="1308" y="696" textLength="18" lengthAdjust="spacingAndGlyphs">10</text>

<path d="M911 712l3.500 3.500 3.500-3.500" fill="none" stroke="#444"/>
<text x="946" y="719" textLength="143" lengthAdjust="spacingAndGlyphs">Test target function</text>

<path d="M930 735l3.500 3.500 3.500-3.500" fill="none" stroke="#444"/>
<circle cx="952.500" cy="736" r="3.800" fill="#3f9e5a"/><text x="955" y="732" style="font-size:9px;fill:#2c7a3f">T</text>
<text x="965" y="742" textLength="175" lengthAdjust="spacingAndGlyphs">inputVarTest(signed int)</text>
<text x="984" y="765" textLength="146" lengthAdjust="spacingAndGlyphs">Local Static Variable</text>
<path d="M948 781l3.500 3.500 3.500-3.500" fill="none" stroke="#444"/>
<text x="984" y="788" textLength="125" lengthAdjust="spacingAndGlyphs">Parameter/return</text>

<circle cx="991" cy="804" r="2.200" fill="#fff" stroke="#3a9b60" stroke-width="1.300"/>
<text x="1003" y="811" textLength="8" lengthAdjust="spacingAndGlyphs">a</text>
<text x="1209" y="811" textLength="19" lengthAdjust="spacingAndGlyphs">int</text>
<text x="1308" y="811" textLength="27" lengthAdjust="spacingAndGlyphs">100</text>

<circle cx="991" cy="828" r="2.200" fill="#fff" stroke="#3a9b60" stroke-width="1.300"/><text x="993" y="825" style="font-size:7px;fill:#2c7a3f">R</text>
<text x="1003" y="834" textLength="69" lengthAdjust="spacingAndGlyphs">returnVar</text>
<text x="1209" y="834" textLength="19" lengthAdjust="spacingAndGlyphs">int</text>
<text x="1408" y="834" textLength="27" lengthAdjust="spacingAndGlyphs">100</text>
<text x="1509" y="834" textLength="27" lengthAdjust="spacingAndGlyphs">100</text>

<text x="984" y="857" textLength="117" lengthAdjust="spacingAndGlyphs">Before call code</text>
<text x="984" y="880" textLength="106" lengthAdjust="spacingAndGlyphs">After call code</text>
<text x="946" y="903" textLength="73" lengthAdjust="spacingAndGlyphs">User code</text>
<path d="M911 919l3.500 3.500 3.500-3.500" fill="none" stroke="#444"/>
<text x="946" y="926" textLength="33" lengthAdjust="spacingAndGlyphs">Stub</text>
</g>

<rect x="897" y="932" width="1016" height="23" fill="#e9e9e9"/>
<path d="M904.500 939v9l3.500-4.500z" fill="#0a6cc8"/>
<text x="916" y="948" textLength="75" lengthAdjust="spacingAndGlyphs" style="font-weight:bold;fill:#0a6cc8">More Info</text>
<rect x="893" y="967" width="1025" height="24" fill="#f3f5fb"/>
<rect x="893" y="967" width="1025" height="1" fill="#a9a9a9"/>
<path d="M967 967v23h73v-23" fill="#fff" stroke="#a9a9a9"/>
<path d="M1044 968v22M1125 968v22M1233 968v22" stroke="#c8c8c8"/>
<text x="899" y="985" textLength="63" lengthAdjust="spacingAndGlyphs">Test Info</text>
<text x="970" y="985" textLength="68" lengthAdjust="spacingAndGlyphs">Test Case</text>
<text x="1048" y="985" textLength="73" lengthAdjust="spacingAndGlyphs">Test Code</text>
<text x="1129" y="985" textLength="101" lengthAdjust="spacingAndGlyphs">Configuration</text>

<!-- annotations -->
<rect x="1283.500" y="664.500" width="216" height="193" rx="1.500" fill="none" stroke="#f0493a" stroke-width="3"/>
<polygon points="267,338 293,337.700 290.700,343.300 1268.300,744.200 1267.700,745.800 287.700,350.700 285.400,356.300" fill="#f0493a"/>
<polygon points="1793,325 1785.400,345.400 1781,341 1478.500,640.500 1477.500,639.500 1777,337 1772.600,332.600" fill="#f0493a"/>
</svg>
</body></html>
